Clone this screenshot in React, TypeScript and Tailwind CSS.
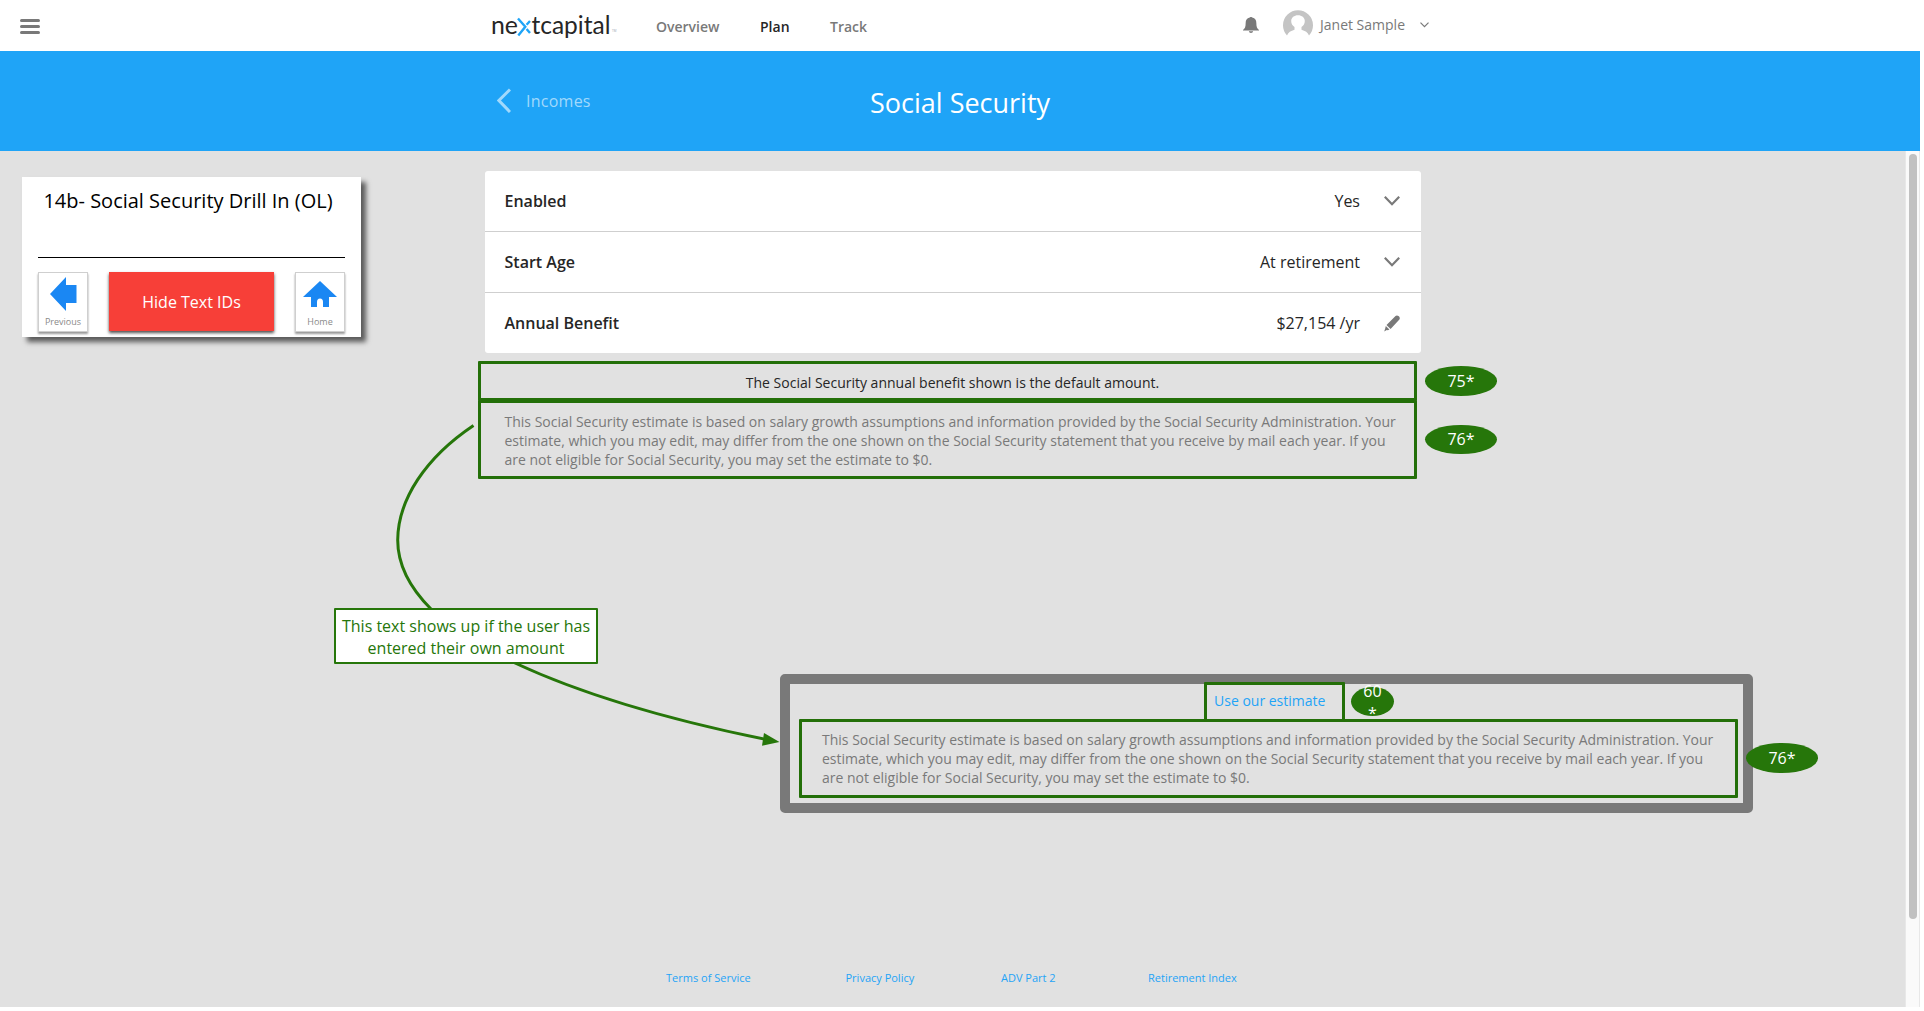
import React from "react";

const ESTIMATE_LINES = [
  "This Social Security estimate is based on salary growth assumptions and information provided by the Social Security Administration. Your",
  "estimate, which you may edit, may differ from the one shown on the Social Security statement that you receive by mail each year. If you",
  "are not eligible for Social Security, you may set the estimate to $0.",
];

function Logo() {
  return (
    <svg width="124" height="36" viewBox="-2 -4 124 36" className="block">
      <g fontFamily="Lato" fontSize="25.5" fill="#262626">
        <text x="-1" y="22.5" textLength="27" lengthAdjust="spacingAndGlyphs">ne</text>
        <text x="39.5" y="22.5" textLength="79" lengthAdjust="spacingAndGlyphs">tcapital</text>
      </g>
      <g fill="none" stroke="#1fa4f7" strokeWidth="2.4">
        <path d="M26 7.500 L33.300 15.800 L26.300 24.500" />
        <path d="M38 10 L34.600 13.800 M34.600 18 L38 22" />
      </g>
    </svg>
  );
}

function Header() {
  return (
    <header className="flex h-[51px] bg-white">
      <div className="ml-5 mt-[19px] flex w-5 flex-col gap-[3px]">
        <span className="h-[3px] rounded-full bg-[#797979]" />
        <span className="h-[3px] rounded-full bg-[#797979]" />
        <span className="h-[3px] rounded-full bg-[#797979]" />
      </div>
      <div className="relative ml-[450px] mt-[7px] h-[36px] w-[124px]">
        <Logo />
        <span className="absolute left-[122px] top-[22px] text-[3px] leading-[4px] text-gray-400">TM</span>
      </div>
      <nav className="flex pt-[17px] text-sm font-semibold leading-5 text-[#797979]">
        <a className="ml-[42px] w-[104px]">Overview</a>
        <a className="w-[70px] text-[#262626]">Plan</a>
        <a className="w-[60px]">Track</a>
      </nav>
      <svg className="ml-[353px] mt-4" width="16" height="18" viewBox="0 0 15 18" preserveAspectRatio="none" fill="#797979">
        <path d="M6.300 1.600C6.300.7 8.700.7 8.700 1.600 11.500 2.300 12.500 4.300 12.500 7c0 4 .7 5.500 2.500 7v.5H0V14c1.800-1.500 2.500-3 2.500-7 0-2.700 1-4.700 3.800-5.400zM5.500 15.300h4c-.2 2.100-3.800 2.100-4 0z" />
      </svg>
      <svg className="ml-[24px] mt-[10px]" width="30" height="27" viewBox="0 0 30 27">
        <path d="M4 25.500A15 15 0 1 1 26 25.500C25 22.500 22 20.800 18.500 19.800V17c2.200-1.400 3.300-3.500 3.300-6 0-3.500-3-5.800-6.800-5.800S8.200 7.500 8.200 11c0 2.500 1.100 4.600 3.300 6v2.800C8 20.800 5 22.500 4 25.500z" fill="#c4c4c4" />
      </svg>
      <span className="ml-[7px] mt-[15px] w-[99.5px] text-sm leading-5 text-[#797979]">Janet Sample</span>
      <svg className="mt-[22px]" width="9" height="6" viewBox="0 0 9 6" fill="none" stroke="#797979" strokeWidth="1.200">
        <path d="M.5 .7 4.500 4.700 8.500 .7" />
      </svg>
    </header>
  );
}

function Chevron() {
  return (
    <svg width="16" height="10" viewBox="0 0 16 10" fill="none" stroke="#797979" strokeWidth="2.200">
      <path d="M.8 .8 8 8.200 15.200 .8" />
    </svg>
  );
}

function Pencil() {
  return (
    <svg width="16" height="17" viewBox="0 0 16 17" fill="#797979">
      <path d="M11.500 1.100C13.200 -.5 17 1.800 15.400 4.500L6.600 14 2.500 9.900zM1.800 11 5.400 14.500 3.900 15.300 2.800 14.900 .2 16.500 1.200 13.600z" />
    </svg>
  );
}

function Row({ label, value, icon }: { label: string; value: string; icon: React.ReactNode }) {
  return (
    <div className="flex h-[60px] items-center pl-[19.5px] pr-[21px] text-base text-[#262626]">
      <span className="font-semibold">{label}</span>
      <span className="ml-auto mr-6">{value}</span>
      <span className="flex w-4 justify-center">{icon}</span>
    </div>
  );
}

function EstimateBox({ padding }: { padding: string }) {
  return (
    <div className={`h-[79px] w-[939px] rounded-[1px] border-[3px] border-[#236f08] text-sm leading-[19px] text-[#797979] ${padding}`}>
      {ESTIMATE_LINES.map((line) => (
        <p key={line} className="whitespace-nowrap">{line}</p>
      ))}
    </div>
  );
}

function Badge({ text }: { text: string }) {
  return (
    <span className="flex h-[29.500px] w-[72px] items-center justify-center rounded-[50%] bg-[#26760a] text-base text-white">
      {text}
    </span>
  );
}

function NavPanel() {
  return (
    <aside className="ml-[22px] mt-[26px] h-[160px] w-[339px] bg-white px-4 shadow-[5px_5px_5px_rgba(0,0,0,0.6)]">
      <h2 className="h-[81px] border-b border-black pr-[7px] pt-[10px] text-center text-xl leading-[27px] text-black">
        14b- Social Security Drill In (OL)
      </h2>
      <div className="mt-[14px] flex justify-between">
        <button className="flex h-[60px] w-[50px] flex-col items-center border border-[#cfcfcf] bg-white pt-1 shadow-[0_2px_2px_rgba(0,0,0,0.4)]">
          <svg width="27" height="34" viewBox="0 0 27 34" fill="#1a87f3">
            <path d="M0 17 16 0V8H26.500V26H16V34z" />
          </svg>
          <span className="mt-[5px] text-[9px] leading-3 text-[#8a8a8a]">Previous</span>
        </button>
        <button className="h-[59px] w-[165px] bg-[#f73f38] text-base text-white shadow-[0_2px_3px_rgba(0,0,0,0.7)]">
          Hide Text IDs
        </button>
        <button className="flex h-[60px] w-[50px] flex-col items-center border border-[#cfcfcf] bg-white pt-2 shadow-[0_2px_2px_rgba(0,0,0,0.4)]">
          <svg width="34" height="26" viewBox="0 0 34 26" fill="#1a87f3">
            <path d="M17 0 34 16H26V26H20V21a3 3.500 0 0 0-6 0V26H8V16H0z" />
          </svg>
          <span className="mt-[9px] text-[9px] leading-3 text-[#8a8a8a]">Home</span>
        </button>
      </div>
    </aside>
  );
}

export default function App() {
  return (
    <div className="relative h-[1011px] w-[1924px] overflow-hidden bg-white font-['Open_Sans',sans-serif]">
      <div className="w-[1920px]">
        <Header />
        <div className="flex h-[100px] bg-[#1fa4f7]">
          <svg className="ml-[497px] mt-[37px]" width="14" height="25" viewBox="0 0 14 25" fill="none" stroke="#a1d9fc" strokeWidth="3">
            <path d="M13 1.500 1.900 12.500 13 24" />
          </svg>
          <span className="ml-[15px] mt-[38px] w-[344px] text-base leading-6 tracking-[0.25px] text-[#a1d9fc]">Incomes</span>
          <h1 className="mt-[34px] text-[27px] leading-9 text-white">Social Security</h1>
        </div>

        <div className="flex h-[856px] bg-[#e1e1e1]">
          <main className="w-[1905px]">
            <div className="flex h-[328px] items-start">
              <NavPanel />
              <section className="ml-[117px] mt-5 w-[943px]">
                <div className="ml-[7px] flex w-[936px] flex-col rounded-[3px] bg-white">
                  <Row label="Enabled" value="Yes" icon={<Chevron />} />
                  <div className="h-px bg-[#cfcfcf]" />
                  <Row label="Start Age" value="At retirement" icon={<Chevron />} />
                  <div className="h-px bg-[#cfcfcf]" />
                  <Row label="Annual Benefit" value="$27,154 /yr" icon={<Pencil />} />
                </div>
                <div className="mt-2 h-[40px] w-[939px] rounded-[1px] border-[3px] border-[#236f08] pl-[10px] pt-[9px] text-center text-sm leading-5 text-[#262626]">
                  The Social Security annual benefit shown is the default amount.
                </div>
                <div className="-mt-px">
                  <EstimateBox padding="pl-[23.5px] pt-[9px]" />
                </div>
              </section>
              <div className="ml-1 mt-[215px] flex flex-col gap-[29px]">
                <Badge text="75*" />
                <Badge text="76*" />
              </div>
            </div>

            <section className="relative ml-[780px] mt-[195px] h-[139px] w-[973px] rounded-[5px] border-[10px] border-[#797979]">
              <div className="-mt-0.5 ml-[414px] flex h-[37px]">
                <div className="h-[40px] w-[141px] rounded-[1px] border-[3px] border-[#236f08] pl-[7px] pt-[6px] text-sm leading-5 text-[#1fa4f7]">
                  Use our estimate
                </div>
                <div className="relative ml-1.5 mt-[5px] h-[29px] w-[43px]">
                  <div className="h-full rounded-[50%] bg-[#26760a]" />
                  <p className="absolute inset-x-0 -top-[7px] text-center text-base leading-[22px] text-white">
                    60
                    <br />*
                  </p>
                </div>
              </div>
              <div className="ml-[9px]">
                <EstimateBox padding="pl-[20px] pt-[8px]" />
              </div>
              <div className="absolute left-[956px] top-[59px]">
                <Badge text="76*" />
              </div>
            </section>

            <footer className="mt-[157px] flex pl-[666px] text-[11px] leading-4 text-[#1fa4f7]">
              <a className="w-[179.500px]">Terms of Service</a>
              <a className="w-[155.500px]">Privacy Policy</a>
              <a className="w-[147px]">ADV Part 2</a>
              <a>Retirement Index</a>
            </footer>
          </main>
          <div className="w-[15px] border-x border-[#e8e8e8] bg-[#fafafa] pl-[3px] pt-[3px]">
            <div className="h-[765px] w-2 rounded-full bg-[#c1c1c1]" />
          </div>
        </div>
      </div>

      {/* Connector from the estimate box to the custom-amount state */}
      <svg className="pointer-events-none absolute left-[390px] top-[415px]" width="395" height="340" viewBox="390 415 395 340">
        <path
          d="M473.500 425.500C425 458 398 500 397.700 540 397.700 565 410 588 431 609 451 631 480 647 515 663 590 698 680 722 766 739.500"
          fill="none"
          stroke="#26760a"
          strokeWidth="3"
        />
        <path d="M764 733 779.500 742 762 745.700z" fill="#26760a" />
      </svg>
      <div className="absolute left-[334px] top-[608px] h-[56px] w-[264px] rounded-[1px] border-2 border-[#26760a] bg-white pt-[5px] text-center text-base leading-[22px] text-[#26760a]">
        This text shows up if the user has
        <br />
        entered their own amount
      </div>
    </div>
  );
}
